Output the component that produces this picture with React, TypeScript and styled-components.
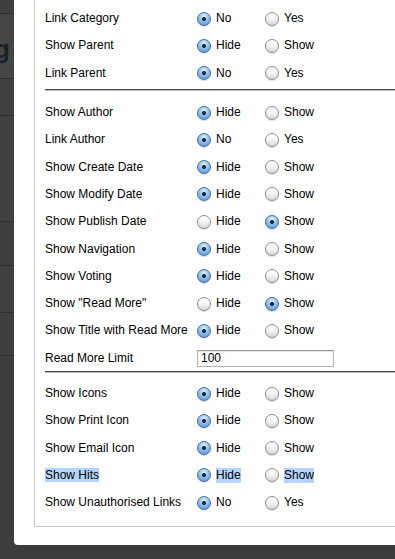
import styled, { createGlobalStyle } from 'styled-components';

const GlobalStyle = createGlobalStyle`
  html, body {
    margin: 0;
    padding: 0;
    background: #3c3c3c;
  }
  body {
    font-family: 'Liberation Sans', Arial, Helvetica, sans-serif;
    font-size: 12px;
    color: #000;
  }
`;

const Screen = styled.div`
  display: flex;
  align-items: flex-start;
  width: 395px;
  height: 559px;
  overflow: hidden;
  background: #3c3c3c;
`;

// the page behind the overlay, only a sliver of it shows on the left
const BehindPage = styled.div`
  flex: none;
  width: 14px;
  height: 559px;
  overflow: hidden;
  background: #404040;
`;

const BehindBand = styled.div<{ h: number; tone: string; line?: boolean }>`
  height: ${(p) => p.h}px;
  background: ${(p) => p.tone};
  border-bottom: ${(p) => (p.line ? '1px solid #2e2e2e' : 'none')};
  overflow: hidden;
`;

const BehindHeading = styled.div`
  font-family: 'Liberation Sans', Arial, sans-serif;
  font-weight: bold;
  font-size: 26px;
  line-height: 30px;
  color: #15222e;
  margin-left: -6px;
  padding-top: 20px;
`;

const Modal = styled.div`
  flex: 1;
  height: 545px;
  background: #fff;
  border-bottom-left-radius: 4px;
  padding: 0 0 18px 20px;
  box-sizing: border-box;
  overflow: hidden;
`;

const Fieldset = styled.div`
  width: 420px;
  height: 527px;
  box-sizing: border-box;
  border: 1px solid #c8c8c8;
  border-top: none;
  padding: 5px 0 0 10px;
`;

const Group = styled.div`
  display: flex;
  flex-direction: column;
`;

const Row = styled.div`
  display: grid;
  grid-template-columns: 152px auto;
  align-items: center;
  height: 27.3px;
`;

const Label = styled.div`
  white-space: nowrap;
  line-height: 15px;
`;

const Options = styled.div`
  display: flex;
  align-items: center;
`;

const Option = styled.label`
  display: inline-flex;
  align-items: center;
  width: 68px;
  line-height: 15px;
`;

const Radio = styled.span<{ checked: boolean }>`
  flex: none;
  box-sizing: border-box;
  width: 14px;
  height: 14px;
  margin: 0 5px 0 0;
  border-radius: 50%;
  border: 1px solid ${(p) => (p.checked ? '#4b6f9e' : '#8d8d8d')};
  background: ${(p) =>
    p.checked
      ? 'radial-gradient(circle at 50% 50%, #1b2b40 0 1.7px, transparent 2.3px), radial-gradient(circle at 50% 28%, #e0effc 0, #93c1ec 45%, #4a8bd4 100%)'
      : 'linear-gradient(#ffffff, #f4f4f4 50%, #d8d8d8)'};
  box-shadow: 0 1px 1px rgba(0, 0, 0, 0.15);
`;

const Text = styled.span<{ selected?: boolean }>`
  background: ${(p) => (p.selected ? '#b5d5fe' : 'transparent')};
`;

const Rule = styled.div<{ above: number; below: number }>`
  height: 0;
  margin: ${(p) => `${p.above}px 0 ${p.below}px`};
  border-top: 1px solid #484848;
  border-bottom: 1px solid #b8b8b8;
`;

const TextInput = styled.input`
  box-sizing: border-box;
  width: 137px;
  height: 17px;
  margin: 0;
  padding: 0 3px;
  border: 1px solid #b4b4b4;
  border-top-color: #9a9a9a;
  box-shadow: inset 0 1px 1px rgba(0, 0, 0, 0.12);
  font-family: 'Liberation Sans', Arial, sans-serif;
  font-size: 12px;
  color: #000;
  outline: none;
`;

type Choice = [string, string];

interface RadioRowProps {
  label: string;
  choices: Choice;
  selected: 0 | 1;
  highlight?: boolean;
}

const RadioRow = ({ label, choices, selected, highlight }: RadioRowProps) => (
  <Row>
    <Label>
      <Text selected={highlight}>{label}</Text>
    </Label>
    <Options>
      {choices.map((c, i) => (
        <Option key={c}>
          <Radio checked={selected === i} />
          <Text selected={highlight}>{c}</Text>
        </Option>
      ))}
    </Options>
  </Row>
);

const NO_YES: Choice = ['No', 'Yes'];
const HIDE_SHOW: Choice = ['Hide', 'Show'];

const App = () => {
  return (
    <>
      <GlobalStyle />
      <Screen>
        <BehindPage>
          <BehindBand h={13} tone="#3e3e3e" line />
          <BehindBand h={64} tone="#454545" line>
            <BehindHeading>g</BehindHeading>
          </BehindBand>
          <BehindBand h={36} tone="#404040" line />
          <BehindBand h={105} tone="#414141" line />
          <BehindBand h={43} tone="#3f3f3f" line />
          <BehindBand h={46} tone="#404040" line />
          <BehindBand h={42} tone="#3e3e3e" line />
          <BehindBand h={210} tone="#3d3d3d" />
        </BehindPage>
        <Modal>
          <Fieldset>
            <Group>
              <RadioRow label="Link Category" choices={NO_YES} selected={0} />
              <RadioRow label="Show Parent" choices={HIDE_SHOW} selected={0} />
              <RadioRow label="Link Parent" choices={NO_YES} selected={0} />
            </Group>
            <Rule above={2} below={8} />
            <Group>
              <RadioRow label="Show Author" choices={HIDE_SHOW} selected={0} />
              <RadioRow label="Link Author" choices={NO_YES} selected={0} />
              <RadioRow label="Show Create Date" choices={HIDE_SHOW} selected={0} />
              <RadioRow label="Show Modify Date" choices={HIDE_SHOW} selected={0} />
              <RadioRow label="Show Publish Date" choices={HIDE_SHOW} selected={1} />
              <RadioRow label="Show Navigation" choices={HIDE_SHOW} selected={0} />
              <RadioRow label="Show Voting" choices={HIDE_SHOW} selected={0} />
              <RadioRow label='Show "Read More"' choices={HIDE_SHOW} selected={1} />
              <RadioRow label="Show Title with Read More" choices={HIDE_SHOW} selected={0} />
              <Row>
                <Label>Read More Limit</Label>
                <TextInput defaultValue="100" />
              </Row>
            </Group>
            <Rule above={-1} below={7} />
            <Group>
              <RadioRow label="Show Icons" choices={HIDE_SHOW} selected={0} />
              <RadioRow label="Show Print Icon" choices={HIDE_SHOW} selected={0} />
              <RadioRow label="Show Email Icon" choices={HIDE_SHOW} selected={0} />
              <RadioRow label="Show Hits" choices={HIDE_SHOW} selected={0} highlight />
              <RadioRow label="Show Unauthorised Links" choices={NO_YES} selected={0} />
            </Group>
          </Fieldset>
        </Modal>
      </Screen>
    </>
  );
};

export default App;
